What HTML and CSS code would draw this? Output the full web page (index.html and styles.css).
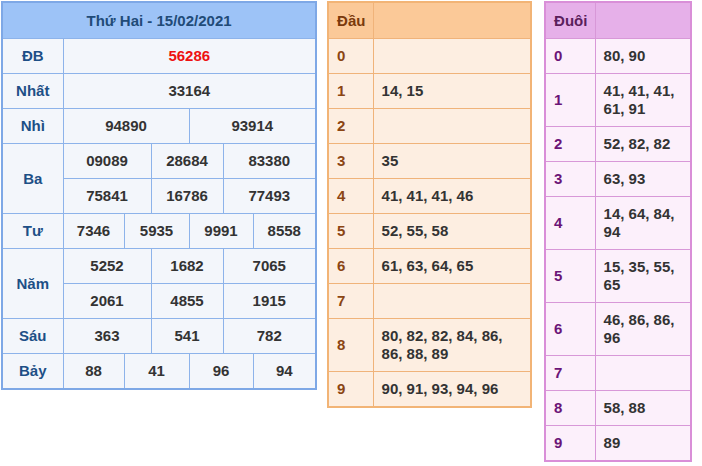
FILE: index.html
```html
<!DOCTYPE html>
<html lang="vi">
<head>
<meta charset="utf-8">
<title>XSMB 15/02/2021</title>
<link rel="stylesheet" href="styles.css">
</head>
<body>
<div class="wrap">
  <table class="kq">
    <colgroup>
      <col class="c-lbl"><col class="c1"><col class="c2"><col class="c3"><col class="c4"><col class="c5"><col class="c6">
    </colgroup>
    <thead>
      <tr><th colspan="7" class="title">Thứ Hai - 15/02/2021</th></tr>
    </thead>
    <tbody>
      <tr><td class="lbl">ĐB</td><td colspan="6" class="db">56286</td></tr>
      <tr><td class="lbl">Nhất</td><td colspan="6">33164</td></tr>
      <tr><td class="lbl">Nhì</td><td colspan="3">94890</td><td colspan="3">93914</td></tr>
      <tr><td class="lbl" rowspan="2">Ba</td><td colspan="2">09089</td><td colspan="2">28684</td><td colspan="2">83380</td></tr>
      <tr><td colspan="2">75841</td><td colspan="2">16786</td><td colspan="2">77493</td></tr>
      <tr><td class="lbl">Tư</td><td>7346</td><td colspan="2">5935</td><td colspan="2">9991</td><td>8558</td></tr>
      <tr><td class="lbl" rowspan="2">Năm</td><td colspan="2">5252</td><td colspan="2">1682</td><td colspan="2">7065</td></tr>
      <tr><td colspan="2">2061</td><td colspan="2">4855</td><td colspan="2">1915</td></tr>
      <tr><td class="lbl">Sáu</td><td colspan="2">363</td><td colspan="2">541</td><td colspan="2">782</td></tr>
      <tr><td class="lbl">Bảy</td><td>88</td><td colspan="2">41</td><td colspan="2">96</td><td>94</td></tr>
    </tbody>
  </table>

  <table class="lt dau">
    <colgroup><col class="k"><col class="v"></colgroup>
    <thead><tr><th>Đầu</th><th></th></tr></thead>
    <tbody>
      <tr><td class="key">0</td><td></td></tr>
      <tr><td class="key">1</td><td>14, 15</td></tr>
      <tr><td class="key">2</td><td></td></tr>
      <tr><td class="key">3</td><td>35</td></tr>
      <tr><td class="key">4</td><td>41, 41, 41, 46</td></tr>
      <tr><td class="key">5</td><td>52, 55, 58</td></tr>
      <tr><td class="key">6</td><td>61, 63, 64, 65</td></tr>
      <tr><td class="key">7</td><td></td></tr>
      <tr><td class="key">8</td><td>80, 82, 82, 84, 86, 86, 88, 89</td></tr>
      <tr><td class="key">9</td><td>90, 91, 93, 94, 96</td></tr>
    </tbody>
  </table>

  <table class="lt duoi">
    <colgroup><col class="k"><col class="v"></colgroup>
    <thead><tr><th>Đuôi</th><th></th></tr></thead>
    <tbody>
      <tr><td class="key">0</td><td>80, 90</td></tr>
      <tr><td class="key">1</td><td>41, 41, 41, 61, 91</td></tr>
      <tr><td class="key">2</td><td>52, 82, 82</td></tr>
      <tr><td class="key">3</td><td>63, 93</td></tr>
      <tr><td class="key">4</td><td>14, 64, 84, 94</td></tr>
      <tr><td class="key">5</td><td>15, 35, 55, 65</td></tr>
      <tr><td class="key">6</td><td>46, 86, 86, 96</td></tr>
      <tr><td class="key">7</td><td></td></tr>
      <tr><td class="key">8</td><td>58, 88</td></tr>
      <tr><td class="key">9</td><td>89</td></tr>
    </tbody>
  </table>
</div>
</body>
</html>
```

FILE: styles.css
```css
html, body {
  margin: 0;
  padding: 0;
  background: #ffffff;
}

body {
  font-family: "Liberation Sans", Arial, sans-serif;
  font-size: 15px;
  font-weight: bold;
  color: #333333;
}

.wrap {
  display: flex;
  align-items: flex-start;
  padding: 1px 0 0 1px;
}

table {
  border-collapse: collapse;
  table-layout: fixed;
}

th, td {
  padding: 8px 8px;
  line-height: 18px;
  font-weight: bold;
}

/* ---------- results table ---------- */
.kq {
  width: 315px;
  border: 2px solid #7ea8e6;
  background: #f3f6fb;
}
.kq td {
  border: 1px solid #8db3ea;
  text-align: center;
  padding: 8px 2px;
}
.kq .title {
  background: #9dc3f7;
  color: #214b78;
  text-align: center;
  border-bottom: 1px solid #8db3ea;
  padding: 9px 2px 8px;
}
.kq .lbl {
  color: #1d4f86;
}
.kq .db {
  color: #ee1111;
}
.c-lbl { width: 61px; }
.c1 { width: 61px; }
.c2 { width: 27px; }
.c3 { width: 38px; }
.c4 { width: 34px; }
.c5 { width: 30px; }
.c6 { width: 63px; }

/* ---------- dau / duoi tables ---------- */
.lt td, .lt th {
  text-align: left;
  vertical-align: middle;
}
.lt th {
  padding: 9px 8px 8px;
}

.dau {
  width: 205px;
  margin-left: 10px;
  border: 2px solid #f2b476;
  background: #fdeee1;
}
.dau th {
  background: #fbc998;
  color: #7a3a0c;
  border: 1px solid #f0b37a;
}
.dau td {
  border: 1px solid #f0b37a;
}
.dau .key {
  color: #8b4513;
}
.dau .k { width: 45px; }

.duoi {
  width: 148px;
  margin-left: 12px;
  border: 2px solid #d98fd8;
  background: #fcf0fb;
}
.duoi th {
  background: #e6b0e9;
  color: #5a1e5c;
  border: 1px solid #d898d8;
}
.duoi td {
  border: 1px solid #d898d8;
}
.duoi .key {
  color: #6b1477;
}
.duoi .k { width: 50px; }
```
